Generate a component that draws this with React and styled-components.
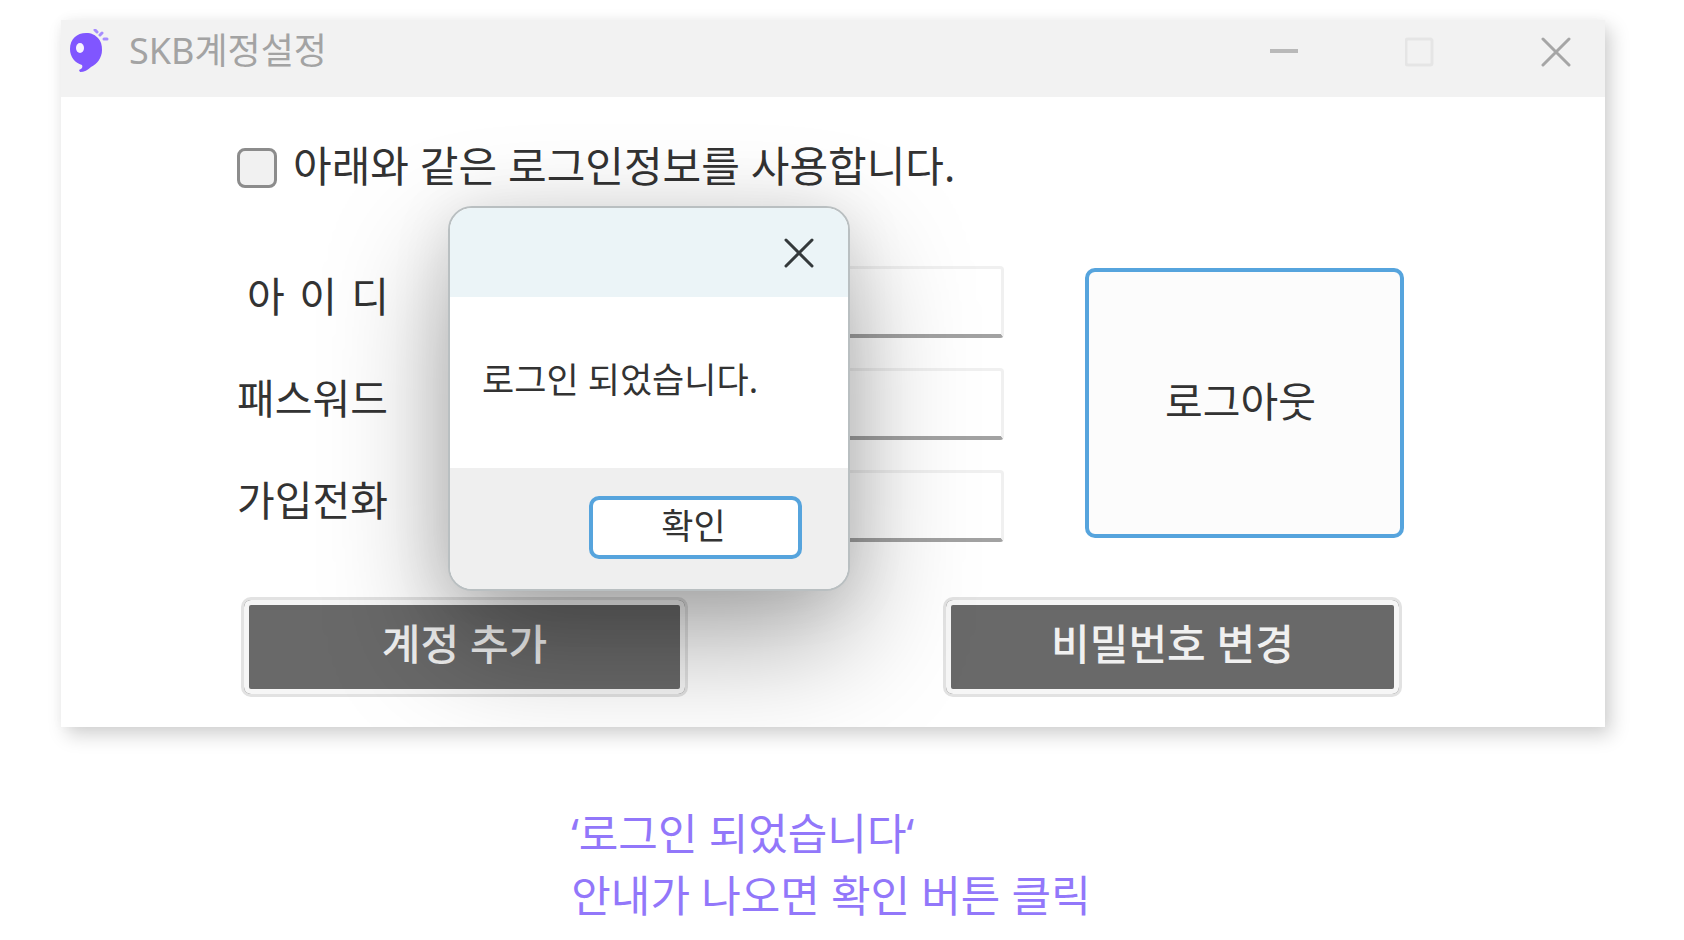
import React, { useState } from "react";
import styled, { createGlobalStyle, css } from "styled-components";

const GlobalStyle = createGlobalStyle`
  * {
    box-sizing: border-box;
  }

  body {
    margin: 0;
    background: #fff;
    font-family: "Noto Sans", "Noto Sans CJK KR", sans-serif;
  }

  button,
  input {
    margin: 0;
    padding: 0;
    font-family: inherit;
  }
`;

const Page = styled.main`
  padding: 20px 79px 12px 61px;
`;

const Window = styled.section`
  position: relative;
  overflow: hidden;
  background: #fff;
  box-shadow: 6px 8px 18px rgba(0, 0, 0, 0.18), 0 0 12px rgba(0, 0, 0, 0.03);
`;

const TitleBar = styled.header`
  display: flex;
  align-items: center;
  justify-content: space-between;
  height: 77px;
  padding: 0 34px 14px 8px;
  background: #f2f2f2;
`;

const Brand = styled.div`
  display: flex;
  align-items: center;
  gap: 18px;
`;

const Title = styled.h1`
  margin: 0;
  padding-bottom: 2px;
  color: #a3a3a3;
  font-size: 36px;
  font-weight: 400;
  line-height: 48px;
`;

const WindowControls = styled.div`
  display: flex;
  gap: 106px;
`;

const IconButton = styled.button`
  display: flex;
  width: 30px;
  height: 30px;
  border: none;
  background: none;
  color: ${(props) => props.color};
`;

const Body = styled.form`
  padding: 51px 201px 30px 176px;
`;

const UseRow = styled.div`
  display: flex;
  align-items: center;
  gap: 16px;
  height: 40px;
`;

const Checkbox = styled.input`
  appearance: none;
  width: 40px;
  height: 40px;
  border: 3px solid #8c8c8c;
  border-radius: 8px;
  background: ${(props) => (props.checked ? "#4c9fdc" : "#f1f1f1")};
`;

const labelText = css`
  color: #333;
  font-weight: 400;
  line-height: 60px;
  white-space: nowrap;
`;

const UseLabel = styled.label`
  ${labelText}
  padding-bottom: 4px;
  font-size: 42px;
`;

const LoginArea = styled.div`
  display: flex;
  gap: 81px;
  margin-top: 78px;
`;

const Fields = styled.div`
  display: flex;
  flex: 1;
  flex-direction: column;
  gap: 30px;
`;

const Field = styled.div`
  display: flex;
  align-items: center;
  justify-content: space-between;
  height: 72px;
`;

const FieldLabel = styled.label`
  ${labelText}
  flex: 0 0 152px;
  padding-bottom: 12px;
  font-size: 41px;
  ${(props) =>
    props.$spread &&
    css`
      padding-left: 10px;
      text-align-last: justify;
    `}
`;

const TextInput = styled.input`
  flex: 1;
  min-width: 0;
  height: 72px;
  margin-left: 71px;
  padding: 0 12px;
  border: 3px solid #f0f0f0;
  border-bottom: 4px solid #a2a2a2;
  border-radius: 4px;
  background: #fff;
  font-size: 35px;
`;

const OutlineButton = styled.button`
  border: 4px solid #56a4dd;
  border-radius: 10px;
  background: #fcfcfc;
  color: #333;
`;

const LogoutButton = styled(OutlineButton)`
  flex: 0 0 319px;
  margin: 2px 0 4px;
  padding: 0 8px 8px 0;
  font-size: 41px;
`;

const Actions = styled.div`
  display: flex;
  justify-content: space-between;
  margin: 55px 2px 0 4px;
`;

const DarkButton = styled.button`
  width: ${(props) => props.width};
  height: 100px;
  padding: 0 0 12px;
  border: 3px solid #e2e2e2;
  border-radius: 10px;
  background: #696969;
  box-shadow: inset 0 0 0 5px #f6f6f6;
  color: #f0f0f0;
  font-size: 42px;
  font-weight: 500;
`;

const Dialog = styled.div`
  position: absolute;
  top: 186px;
  left: 387px;
  width: 402px;
  overflow: hidden;
  border: 2px solid #b9bfc1;
  border-radius: 24px;
  background: #fff;
  box-shadow: 0 50px 120px rgba(0, 0, 0, 0.34), 0 4px 60px rgba(0, 0, 0, 0.1);
`;

const DialogHeader = styled.div`
  display: flex;
  align-items: center;
  justify-content: flex-end;
  height: 89px;
  padding-right: 34px;
  background: #ebf4f7;
`;

const DialogMessage = styled.p`
  height: 171px;
  margin: 0;
  padding: 59px 0 0 32px;
  color: #333;
  font-size: 35px;
  line-height: 48px;
  white-space: nowrap;
`;

const DialogFooter = styled.div`
  display: flex;
  justify-content: flex-end;
  padding: 28px 46px 30px;
  background: #efefef;
`;

const ConfirmButton = styled(OutlineButton)`
  width: 213px;
  height: 63px;
  padding: 0 4px 4px 0;
  background: #fff;
  font-size: 35px;
  line-height: 48px;
`;

const Guide = styled.p`
  width: fit-content;
  margin: 76px auto 0;
  padding-right: 4px;
  color: #9277fa;
  font-size: 43px;
  line-height: 62px;
`;

const BalloonIcon = () => (
  <svg width="42" height="46" viewBox="0 0 42 46" aria-hidden="true">
    <path
      d="M17 4C23 4 26 6 29 9C32 12 33 16 33 21C33 29 28 35 22 38C19 41 15 43 11 43L10 41C13 40 14 38 13 36C6 34 1 28 1 20C1 10 8 4 17 4Z"
      fill="#8056ff"
    />
    <ellipse cx="11" cy="19" rx="4" ry="5" fill="#f6f2ff" />
    <path
      d="M26 1L28 3M33 4L31 6M35 10L38 10"
      stroke="#a78dff"
      strokeWidth="3"
      strokeLinecap="round"
    />
  </svg>
);

const MinimizeIcon = () => (
  <svg width="30" height="30" viewBox="0 0 30 30" aria-hidden="true">
    <path d="M1 14H29" stroke="currentColor" strokeWidth="4" />
  </svg>
);

const MaximizeIcon = () => (
  <svg width="30" height="30" viewBox="0 0 30 30" aria-hidden="true">
    <rect
      x="1"
      y="2"
      width="26"
      height="26"
      rx="2"
      fill="none"
      stroke="currentColor"
      strokeWidth="3"
    />
  </svg>
);

const CloseIcon = () => (
  <svg width="30" height="30" viewBox="0 0 30 30" aria-hidden="true">
    <path
      d="M2 2L28 28M28 2L2 28"
      stroke="currentColor"
      strokeWidth="3"
      strokeLinecap="round"
    />
  </svg>
);

const fields = [
  { id: "userId", label: "아 이 디", type: "text", spread: true },
  { id: "password", label: "패스워드", type: "password" },
  { id: "phone", label: "가입전화", type: "tel" },
];

const App = () => {
  const [useInfo, setUseInfo] = useState(false);
  const [showDialog, setShowDialog] = useState(true);

  return (
    <>
      <GlobalStyle />
      <Page lang="ko">
        <Window>
          <TitleBar>
            <Brand>
              <BalloonIcon />
              <Title>SKB계정설정</Title>
            </Brand>
            <WindowControls>
              <IconButton type="button" aria-label="최소화" color="#b9b9b9">
                <MinimizeIcon />
              </IconButton>
              <IconButton type="button" aria-label="최대화" color="#e5e5e5">
                <MaximizeIcon />
              </IconButton>
              <IconButton type="button" aria-label="닫기" color="#a6a6a6">
                <CloseIcon />
              </IconButton>
            </WindowControls>
          </TitleBar>
          <Body onSubmit={(e) => e.preventDefault()}>
            <UseRow>
              <Checkbox
                id="useInfo"
                type="checkbox"
                checked={useInfo}
                onChange={(e) => setUseInfo(e.target.checked)}
              />
              <UseLabel htmlFor="useInfo">
                아래와 같은 로그인정보를 사용합니다.
              </UseLabel>
            </UseRow>
            <LoginArea>
              <Fields>
                {fields.map(({ id, label, type, spread }) => (
                  <Field key={id}>
                    <FieldLabel htmlFor={id} $spread={spread}>
                      {label}
                    </FieldLabel>
                    <TextInput id={id} type={type} />
                  </Field>
                ))}
              </Fields>
              <LogoutButton type="button">로그아웃</LogoutButton>
            </LoginArea>
            <Actions>
              <DarkButton type="button" width="447px">
                계정 추가
              </DarkButton>
              <DarkButton type="button" width="459px">
                비밀번호 변경
              </DarkButton>
            </Actions>
          </Body>
          {showDialog && (
            <Dialog role="dialog" aria-labelledby="dialogMessage">
              <DialogHeader>
                <IconButton
                  type="button"
                  aria-label="닫기"
                  color="#34393b"
                  onClick={() => setShowDialog(false)}
                >
                  <CloseIcon />
                </IconButton>
              </DialogHeader>
              <DialogMessage id="dialogMessage">
                로그인 되었습니다.
              </DialogMessage>
              <DialogFooter>
                <ConfirmButton
                  type="button"
                  onClick={() => setShowDialog(false)}
                >
                  확인
                </ConfirmButton>
              </DialogFooter>
            </Dialog>
          )}
        </Window>
        <Guide>
          ‘로그인 되었습니다‘
          <br />
          안내가 나오면 확인 버튼 클릭
        </Guide>
      </Page>
    </>
  );
};

export default App;
